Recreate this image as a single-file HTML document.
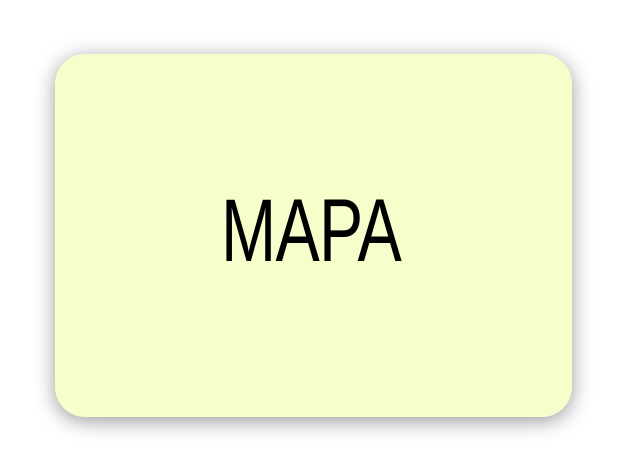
<!DOCTYPE html>
<html><head><style>
html,body{margin:0;padding:0;background:#fff;width:627px;height:472px;overflow:hidden}
.card{position:absolute;left:55px;top:54px;width:517px;height:363px;border-radius:30px;background:#f7fdcb;box-shadow:0 4px 20px rgba(0,0,0,0.4)}
.t{position:absolute;left:221px;top:180px;font-family:"Liberation Sans",sans-serif;font-size:89px;line-height:100px;color:#000;transform:scaleX(0.745);transform-origin:0 0;white-space:nowrap;letter-spacing:-1px}
</style></head><body>
<div class="card"></div>
<div class="t">MAPA</div>
</body></html>
